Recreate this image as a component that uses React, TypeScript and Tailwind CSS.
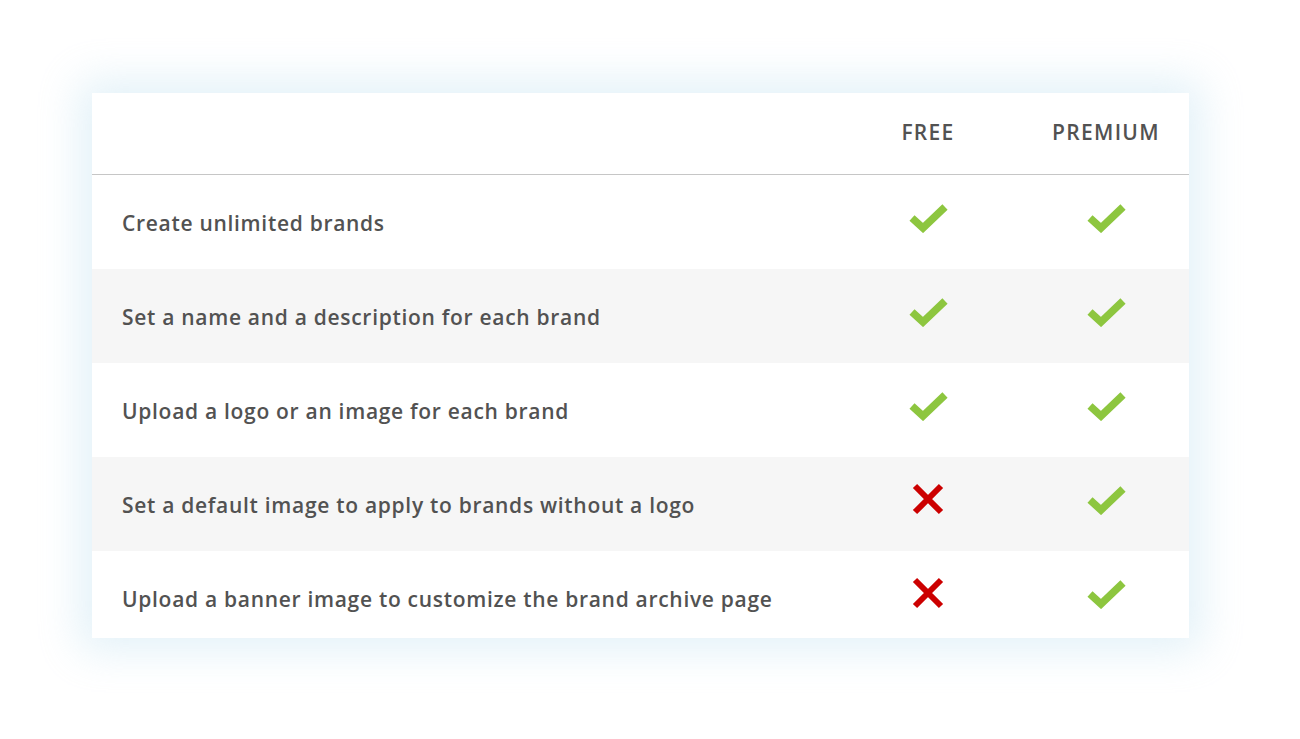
import React from 'react';

const rows: { label: string; free: boolean; premium: boolean }[] = [
  { label: 'Create unlimited brands', free: true, premium: true },
  { label: 'Set a name and a description for each brand', free: true, premium: true },
  { label: 'Upload a logo or an image for each brand', free: true, premium: true },
  { label: 'Set a default image to apply to brands without a logo', free: false, premium: true },
  { label: 'Upload a banner image to customize the brand archive page', free: false, premium: true },
];

const Check = () => (
  <svg width="40" height="32" viewBox="0 0 40 32" className="block">
    <path d="M4 17 L15 27 L37 6" fill="none" stroke="#8dc63f" strokeWidth="7.5" strokeLinejoin="miter" />
  </svg>
);

const Cross = () => (
  <svg width="32" height="32" viewBox="0 0 32 32" className="block">
    <path d="M3 3 L29 29 M29 3 L3 29" fill="none" stroke="#cc0000" strokeWidth="6" />
  </svg>
);

const Mark = ({ ok }: { ok: boolean }) => (ok ? <Check /> : <Cross />);

export default function App() {
  return (
    <div className="w-[1300px] h-[739px] bg-white pt-[93px] pl-[92px] font-['Open_Sans',sans-serif]">
      <div className="w-[1097px] h-[545px] overflow-hidden bg-white shadow-[0_0_40px_12px_rgba(190,225,240,0.45)]">
        <div className="grid grid-cols-[1fr_190px_166px] h-[82px] border-b border-[#c6c6c6] items-center text-[21px] font-semibold text-[#525252] tracking-[1.3px]">
          <div />
          <div className="text-center pb-[2px]">FREE</div>
          <div className="text-center pb-[2px]">PREMIUM</div>
        </div>
        {rows.map((r, i) => (
          <div
            key={r.label}
            className={`grid grid-cols-[1fr_190px_166px] h-[94px] items-center ${i % 2 === 1 ? 'bg-[#f6f6f6]' : 'bg-white'}`}
          >
            <div className="pl-[30px] pt-[4px] text-[21px] font-semibold text-[#525252] tracking-[0.7px]">{r.label}</div>
            <div className="flex justify-center pb-[10px]">
              <Mark ok={r.free} />
            </div>
            <div className="flex justify-center pb-[10px]">
              <Mark ok={r.premium} />
            </div>
          </div>
        ))}
      </div>
    </div>
  );
}
